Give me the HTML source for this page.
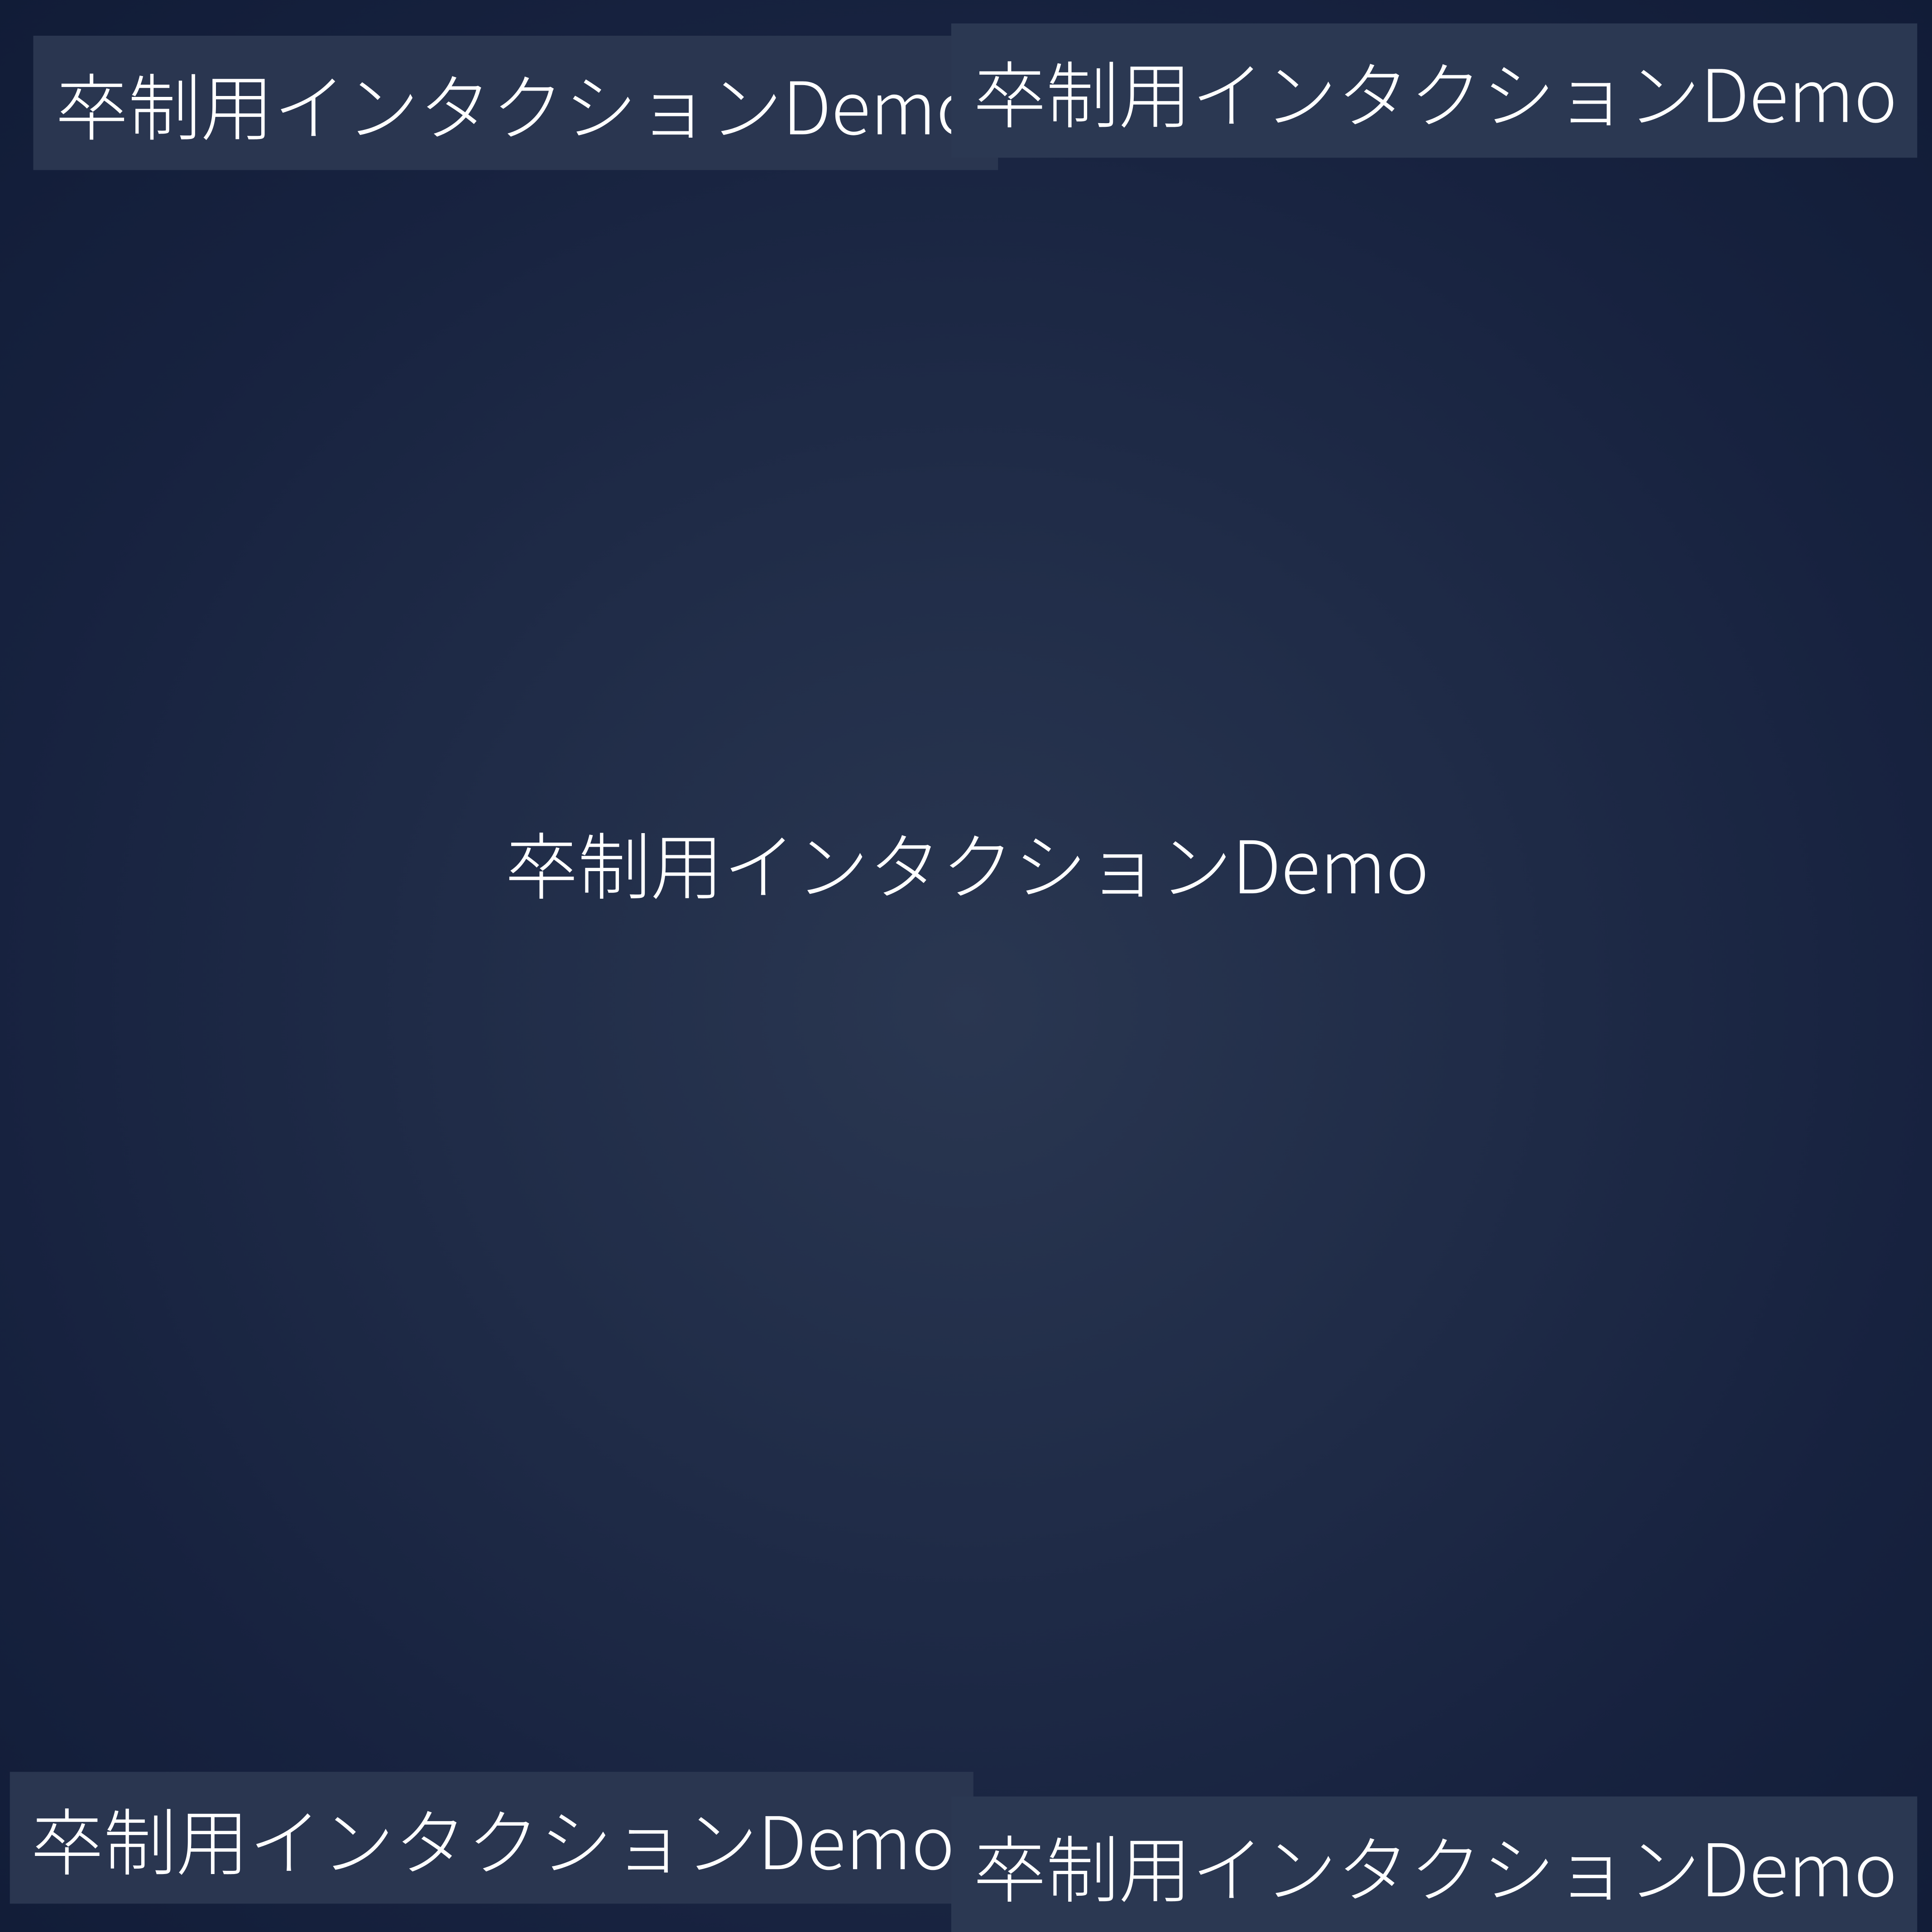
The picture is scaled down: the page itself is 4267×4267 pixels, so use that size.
<!DOCTYPE html>
<html><head><meta charset="utf-8"><style>
html,body{margin:0;padding:0;width:4267px;height:4267px;overflow:hidden;background:#141f3a}
#w{position:absolute;left:0;top:0;width:1568px;height:1568px;transform:scale(2.72130);transform-origin:0 0;
background:radial-gradient(circle at 50% 52%,#2a3751 0%,#1f2b47 40%,#17223f 70%,#111c37 100%);}
.b{position:absolute;background:#2b3852;overflow:hidden;white-space:nowrap;display:flex;align-items:center;
color:#fff;font-weight:300;font-size:59px;box-sizing:border-box}
.b span,.t{font-family:"Noto Sans CJK JP",sans-serif}
.t{position:absolute;white-space:nowrap;color:#fff;font-weight:300;font-size:59px}
</style></head><body><div id="w">
<div class="b" style="left:27px;top:29px;width:783px;height:109px;padding-left:18px;background:#2a3650"><span>卒制用インタクションDemo</span></div>
<div class="b" style="left:772px;top:19px;width:784px;height:109px;padding-left:18px"><span>卒制用インタクションDemo</span></div>
<div class="b" style="left:8px;top:1438px;width:782px;height:107px;padding-left:17px;background:#2a3650"><span>卒制用インタクションDemo</span></div>
<div class="b" style="left:772px;top:1458px;width:784px;height:110px;padding-left:18px"><span>卒制用インタクションDemo</span></div>
<div class="t" style="left:410px;top:660px;line-height:80px">卒制用インタクションDemo</div>
</div></body></html>
